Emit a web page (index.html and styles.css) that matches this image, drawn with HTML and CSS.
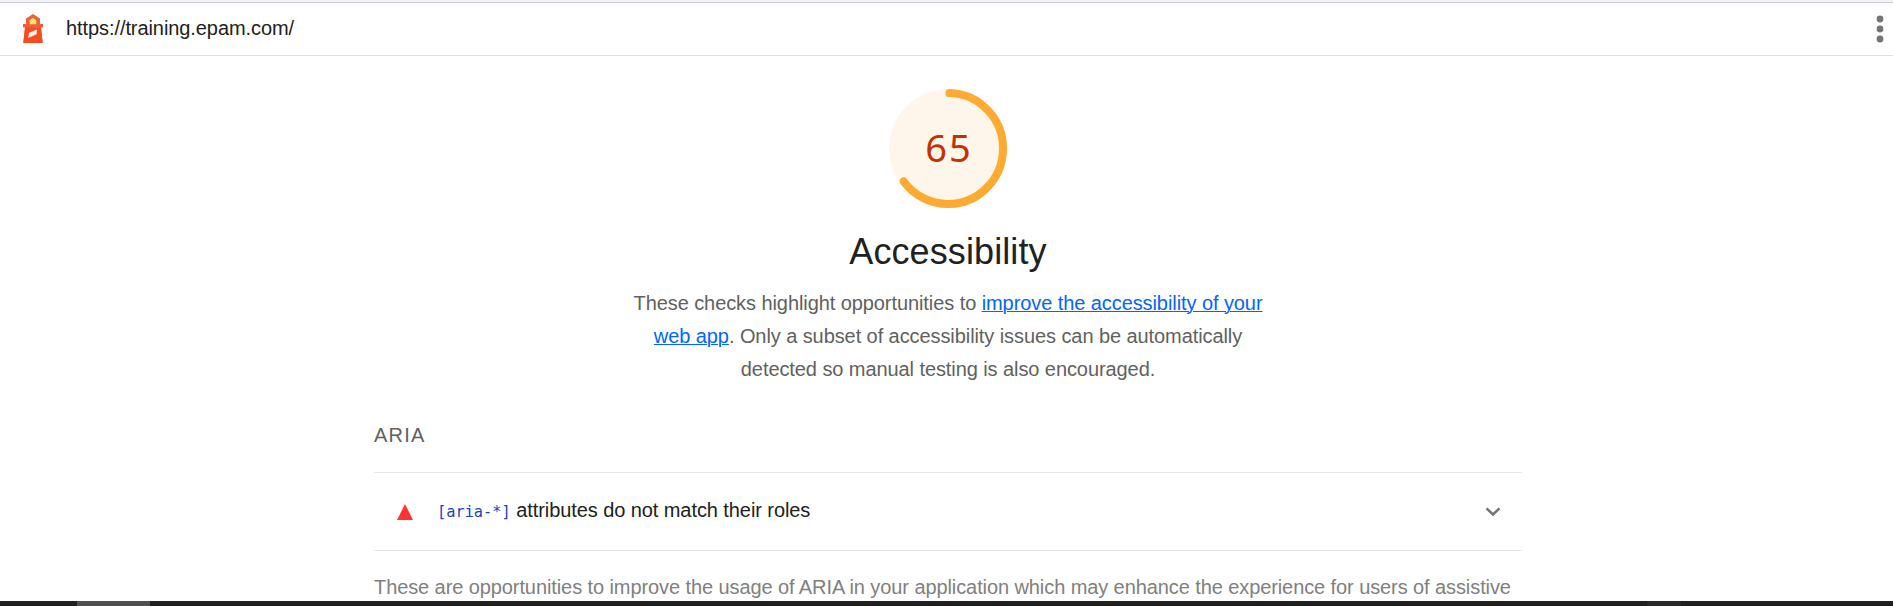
FILE: index.html
```html
<!DOCTYPE html>
<html lang="en">
<head>
<meta charset="utf-8">
<title>Lighthouse report</title>
<link rel="stylesheet" href="styles.css">
</head>
<body>
<header class="topbar">
  <svg class="logo" width="20" height="30" viewBox="0 0 20 30">
    <path fill="#f06038" d="M3 4.500 10 0l7 4.500V10h3v3.500h-2L19.700 29H.300L2 13.500H0V10h3z"/>
    <path fill="#f94b20" d="M2 13.500h16L19.700 29H.300z"/>
    <path fill="#fbe072" d="M6.700 10.300V6.300L10 3.800l3.300 2.500v4z"/>
    <path fill="#f1f1f1" d="m6 18.800 8-3.300-.300 4.800L5.200 24z"/>
  </svg>
  <span class="url">https://training.epam.com/</span>
  <svg class="menu" width="8" height="28" viewBox="0 0 8 28" fill="#757575">
    <circle cx="4" cy="4" r="3.400"/><circle cx="4" cy="14" r="3.400"/><circle cx="4" cy="24" r="3.400"/>
  </svg>
</header>
<main class="report">
  <div class="gauge">
    <svg width="118" height="119" viewBox="0 0 118 118" preserveAspectRatio="none">
      <circle cx="59" cy="59" r="59" fill="#fff6eb"/>
      <circle class="arc" cx="59" cy="59" r="55" pathLength="100"/>
    </svg>
    <span class="score">65</span>
  </div>
  <h1 class="title">Accessibility</h1>
  <p class="description">These checks highlight opportunities to <a>improve the accessibility of your</a><br><a>web app</a>. Only a subset of accessibility issues can be automatically<br>detected so manual testing is also encouraged.</p>
  <section class="group">
    <h2 class="group-title">ARIA</h2>
    <div class="audit">
      <svg class="fail" width="16" height="16" viewBox="0 0 16 16"><path fill="#f33" d="M8 0l8 16H0z"/></svg>
      <span class="audit-text"><code>[aria-*]</code> <span class="audit-title">attributes do not match their roles</span></span>
      <svg class="chevron" width="16" height="10" viewBox="0 0 16 10"><path fill="none" stroke="#757575" stroke-width="2.500" d="M1.500 1.300 8 7.500l6.500-6.200"/></svg>
    </div>
    <p class="group-note">These are opportunities to improve the usage of ARIA in your application which may enhance the experience for users of assistive</p>
  </section>
</main>
<footer class="taskbar"><span class="task"></span><span class="tray"></span></footer>
</body>
</html>
```
FILE: styles.css
```css
body {
  margin: 0;
  height: 606px;
  overflow: hidden;
  display: flex;
  flex-direction: column;
  background: #fff;
  color: #212121;
  font: 20px/33px "Liberation Sans", Arial, sans-serif;
}
.topbar {
  box-sizing: border-box;
  flex: none;
  height: 56px;
  display: flex;
  align-items: center;
  padding: 0 9px 0 23px;
  border-bottom: 1px solid #dfdfdf;
  background: linear-gradient(#f1f3f4 2px, #cacdd8 2px, #cacdd8 3px, #fff 3px);
}
.logo { margin-top: 2px; }
.url { margin: 2px 0 0 23px; letter-spacing: -0.08px; }
.menu { margin: 2px 0 0 auto; }
.report {
  flex: 1;
  min-height: 0;
  overflow: hidden;
  display: flex;
  flex-direction: column;
  align-items: center;
  padding: 33px 0 0 3px;
}
.gauge { display: grid; place-items: center; flex: none; }
.gauge > * { grid-area: 1 / 1; }
.arc {
  fill: none;
  stroke: #fa3;
  stroke-width: 8;
  stroke-linecap: round;
  stroke-dasharray: 64.5 100;
  transform: rotate(-88.5deg);
  transform-origin: center;
}
.score { color: #c33300; font: 38px/50px "Noto Sans", sans-serif; letter-spacing: 2px; padding: 0 0 3px 2px; }
.title { margin: 20px 0 0; font-size: 36px; line-height: 48px; font-weight: 400; letter-spacing: 0.1px; }
.description { margin: 11px 0 0; color: #616161; text-align: center; white-space: nowrap; letter-spacing: -0.08px; }
.description a { color: #06f; text-decoration: underline; text-decoration-thickness: 1px; }
.group { width: 1148px; margin-top: 33px; }
.group-title { margin: 0; font-size: 20px; line-height: 32px; font-weight: 400; color: #616161; letter-spacing: 1.2px; }
.audit {
  box-sizing: border-box;
  height: 79px;
  margin-top: 21px;
  padding: 0 21px 0 23px;
  display: flex;
  align-items: center;
  border: solid #e8e8e8;
  border-width: 1px 0;
}
.fail { margin-top: 1px; }
.audit-text { margin: -2px 0 0 24px; }
.audit code { color: #1a3fc4; font: 15.3px "DejaVu Sans Mono", monospace; }
.audit-title { letter-spacing: -0.08px; }
.chevron { margin-left: auto; }
.group-note { margin: 20px 0 0; color: #808080; white-space: nowrap; letter-spacing: -0.09px; }
.taskbar { flex: none; height: 5px; display: flex; justify-content: space-between; background: #202020; }
.task { width: 73px; margin-left: 77px; background: #505050; }
.tray { width: 34px; margin-right: 212px; background: #292929; }
```
